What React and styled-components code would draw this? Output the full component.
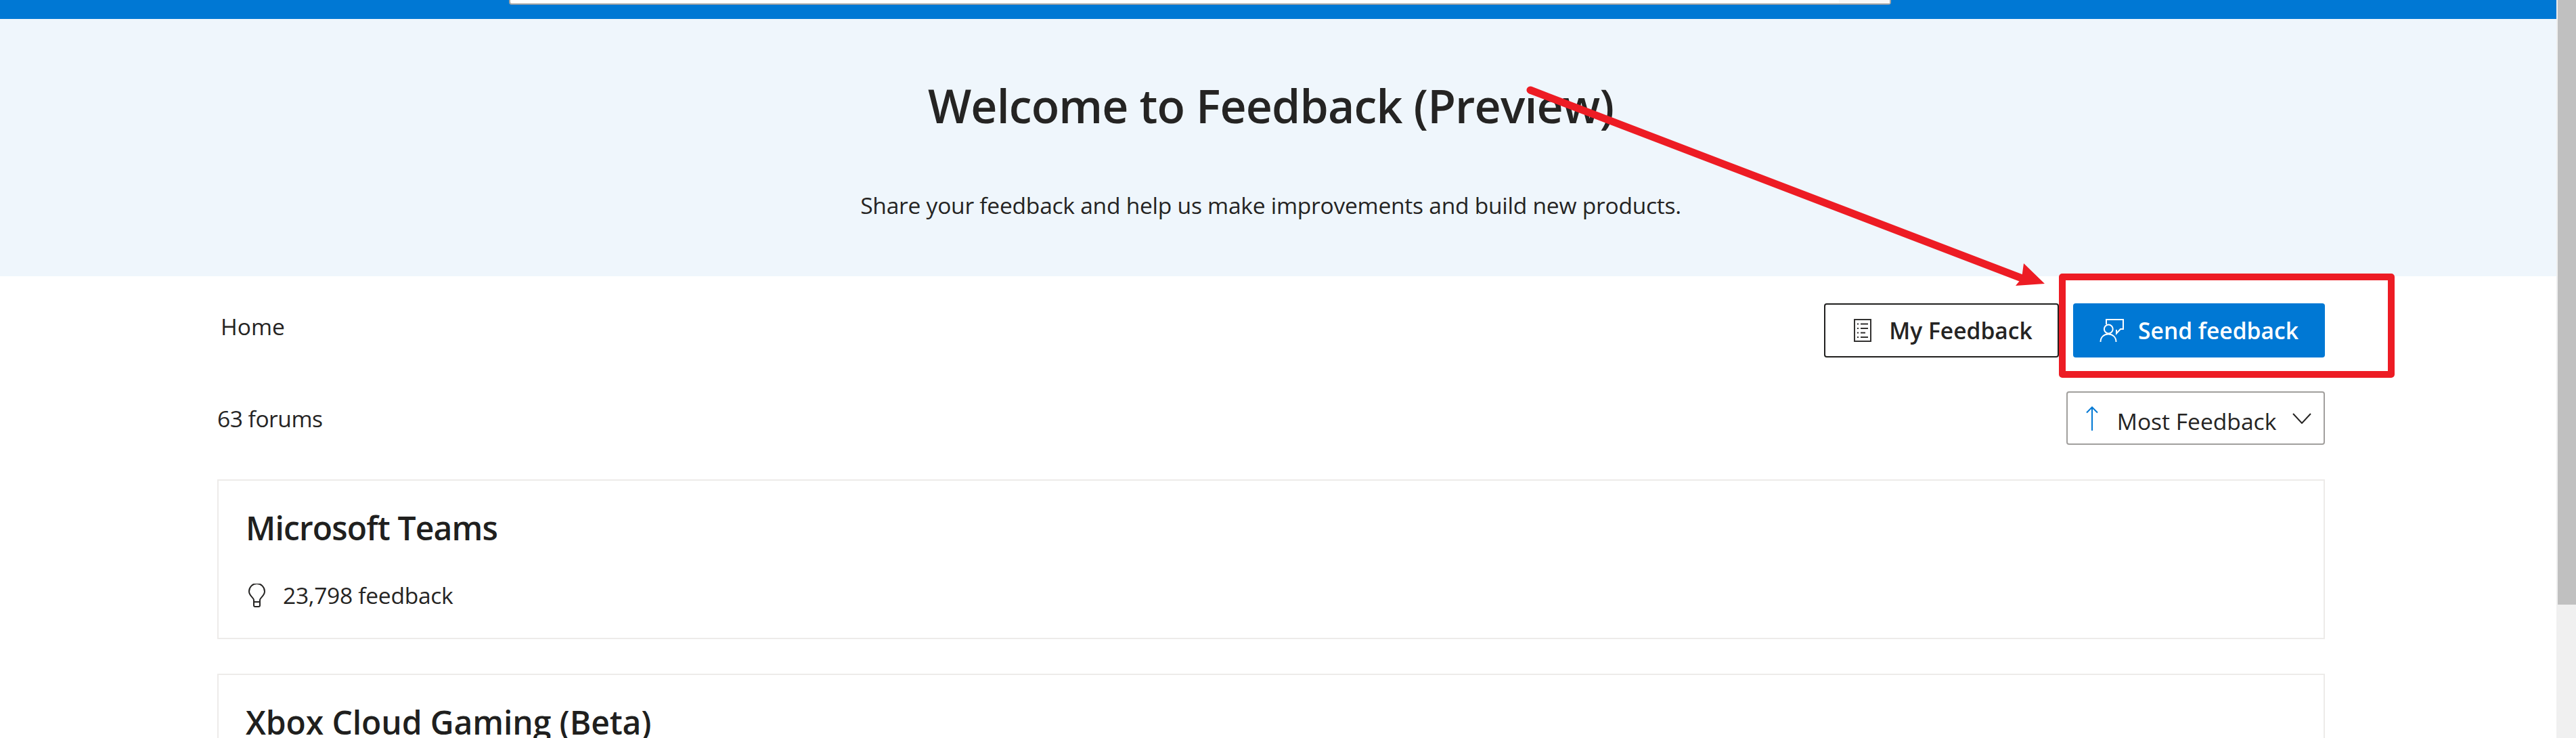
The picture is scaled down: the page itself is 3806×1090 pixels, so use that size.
import React from 'react';
import styled, { createGlobalStyle } from 'styled-components';

const GlobalStyle = createGlobalStyle`
  html, body {
    margin: 0;
    height: 100%;
    overflow: hidden;
    background: #fff;
  }
  body {
    font-family: "Open Sans", "Noto Sans", "Liberation Sans", sans-serif;
    color: #252423;
  }
`;

const Page = styled.div`
  position: relative;
  display: flex;
  width: 3806px;
  height: 1090px;
  overflow: hidden;
`;

const Main = styled.div`
  flex: 1;
  min-width: 0;
`;

const TopBar = styled.header`
  height: 28px;
  padding-left: 752px;
  background: #0078d4;
  box-sizing: border-box;
`;

const SearchBox = styled.div`
  display: flex;
  justify-content: flex-end;
  width: 2042px;
  height: 7px;
  box-sizing: border-box;
  background: #fff;
  border: 2px solid #a6a6a6;
  border-top: 0;
  border-radius: 0 0 4px 4px;
`;

const SearchButton = styled.div`
  width: 75px;
  background: #f8f8f8;
`;

const Hero = styled.section`
  height: 380px;
  padding: 78px 22px 0 0;
  box-sizing: border-box;
  background: #eff6fc;
  text-align: center;
`;

const Heading = styled.h1`
  margin: 0;
  font-size: 68px;
  line-height: 100px;
  font-weight: 600;
  letter-spacing: -0.85px;
  color: #252423;
`;

const Lead = styled.p`
  margin: 75px 0 0;
  font-size: 33.6px;
  line-height: 44px;
  letter-spacing: -0.26px;
`;

const Content = styled.main`
  padding: 40px 342px 0 321px;
`;

const ToolRow = styled.div`
  display: flex;
  justify-content: space-between;
  align-items: flex-start;
`;

const Crumb = styled.a`
  margin: 12px 0 0 5px;
  font-size: 33.6px;
  line-height: 44px;
`;

const Actions = styled.div`
  display: flex;
  gap: 21px;
`;

const Button = styled.button`
  display: flex;
  align-items: center;
  justify-content: center;
  gap: ${(p) => (p.$primary ? 21 : 26)}px;
  width: ${(p) => (p.$primary ? 372 : 347)}px;
  height: 80px;
  padding: 0 0 0 ${(p) => (p.$primary ? 0 : 5)}px;
  box-sizing: border-box;
  border: ${(p) => (p.$primary ? '0' : '2px solid #201f1e')};
  border-radius: 4px;
  background: ${(p) => (p.$primary ? '#0078d4' : '#fff')};
  color: ${(p) => (p.$primary ? '#fff' : '#252423')};
  font-family: inherit;
  font-size: 33.6px;
  font-weight: 600;
`;

const CountRow = styled.div`
  display: flex;
  justify-content: space-between;
  align-items: center;
  margin-top: 50px;
`;

const Count = styled.span`
  font-size: 33.6px;
  line-height: 44px;
  letter-spacing: -0.5px;
`;

const SortSelect = styled.div`
  display: flex;
  align-items: center;
  justify-content: space-between;
  width: 382px;
  height: 79px;
  padding: 0 18px 0 27px;
  box-sizing: border-box;
  border: 2px solid #a19f9d;
  border-radius: 4px;
  font-size: 33.6px;
`;

const SortLabel = styled.span`
  margin-left: 4px;
  padding-top: 9px;
`;

const ForumList = styled.div`
  display: flex;
  flex-direction: column;
  gap: 51px;
  margin-top: 51px;
`;

const ForumCard = styled.article`
  flex-shrink: 0;
  padding: 38px 41px 41px;
  border: 2px solid #edebe9;
`;

const ForumTitle = styled.h2`
  margin: 0 0 0 -1px;
  font-size: 48px;
  line-height: 64px;
  font-weight: 600;
  letter-spacing: ${(p) => p.$tracking}px;
  color: #201f1e;
`;

const ForumMeta = styled.div`
  display: flex;
  align-items: center;
  gap: 26px;
  margin: 45px 0 0 3px;
  font-size: 33.6px;
  line-height: 44px;
  letter-spacing: -0.3px;
`;

const ScrollTrack = styled.div`
  flex-shrink: 0;
  width: 29px;
  padding-left: 2px;
  box-sizing: border-box;
  background: #f0f0f0;
`;

const ScrollThumb = styled.div`
  height: 893px;
  background: #c0c0c0;
`;

// red annotation drawn over the page
const Callout = styled.div`
  position: absolute;
  left: 3042px;
  top: 404px;
  width: 496px;
  height: 154px;
  box-sizing: border-box;
  border: 10px solid #ed1c24;
  border-radius: 5px;
`;

const ArrowLayer = styled.svg`
  position: absolute;
  left: 0;
  top: 0;
  pointer-events: none;
`;

const ListIcon = () => (
  <svg width="26" height="34" viewBox="0 0 26 34" fill="none" stroke="#323130" strokeWidth="2">
    <rect x="1" y="1" width="24" height="32" />
    <path d="M5 7.500h2M10 7.500h11M5 14h2M10 14h11M5 20.500h2M10 20.500h7M5 27h2M10 27h11" />
  </svg>
);

const SendIcon = () => (
  <svg width="36" height="34" viewBox="0 0 36 34" fill="none" stroke="#fff" strokeWidth="2">
    <path d="M10 8V1h25v14h-4l-6 6.500V16" />
    <circle cx="13.300" cy="15" r="6.400" />
    <path d="M1.500 34c0-7 5-11.500 11.500-11.500S24.500 27 24.500 34" />
  </svg>
);

const UpArrow = () => (
  <svg width="18" height="36" viewBox="0 0 18 36" fill="none" stroke="#0078d4" strokeWidth="2">
    <path d="M9 36V1.500M1 9.500l8-8 8 8" />
  </svg>
);

const Chevron = () => (
  <svg width="28" height="16" viewBox="0 0 28 16" fill="none" stroke="#252423" strokeWidth="2">
    <path d="M1 1l13 14L27 1" />
  </svg>
);

const BulbIcon = () => (
  <svg width="25" height="35" viewBox="0 0 25 35" fill="none" stroke="#252423" strokeWidth="2">
    <path d="M8 27v-3c0-3-7-6-7-12.500a11.500 11.500 0 0 1 23 0C24 18 17 21 17 24v3M8 27h9v5a2 2 0 0 1-2 2h-5a2 2 0 0 1-2-2z" />
  </svg>
);

// the second card runs past the bottom of the window, so its count is never seen
const forums = [
  { name: 'Microsoft Teams', count: '23,798', tracking: -0.85 },
  { name: 'Xbox Cloud Gaming (Beta)', tracking: -0.1 },
];

export default function App() {
  return (
    <Page>
      <GlobalStyle />
      <Main>
        <TopBar>
          <SearchBox>
            <SearchButton />
          </SearchBox>
        </TopBar>
        <Hero>
          <Heading>Welcome to Feedback (Preview)</Heading>
          <Lead>Share your feedback and help us make improvements and build new products.</Lead>
        </Hero>
        <Content>
          <ToolRow>
            <Crumb>Home</Crumb>
            <Actions>
              <Button>
                <ListIcon />
                My Feedback
              </Button>
              <Button $primary>
                <SendIcon />
                Send feedback
              </Button>
            </Actions>
          </ToolRow>
          <CountRow>
            <Count>63 forums</Count>
            <SortSelect>
              <UpArrow />
              <SortLabel>Most Feedback</SortLabel>
              <Chevron />
            </SortSelect>
          </CountRow>
          <ForumList>
            {forums.map((forum) => (
              <ForumCard key={forum.name}>
                <ForumTitle $tracking={forum.tracking}>{forum.name}</ForumTitle>
                {forum.count && (
                  <ForumMeta>
                    <BulbIcon />
                    {forum.count} feedback
                  </ForumMeta>
                )}
              </ForumCard>
            ))}
          </ForumList>
        </Content>
      </Main>
      <ScrollTrack>
        <ScrollThumb />
      </ScrollTrack>
      <Callout />
      <ArrowLayer width="3806" height="1090" viewBox="0 0 3806 1090">
        <line x1="2261" y1="133" x2="2990" y2="412" stroke="#ed1c24" strokeWidth="11" strokeLinecap="round" />
        <polygon points="2990,389 3021,419 2978,422 2987,411" fill="#ed1c24" />
      </ArrowLayer>
    </Page>
  );
}
